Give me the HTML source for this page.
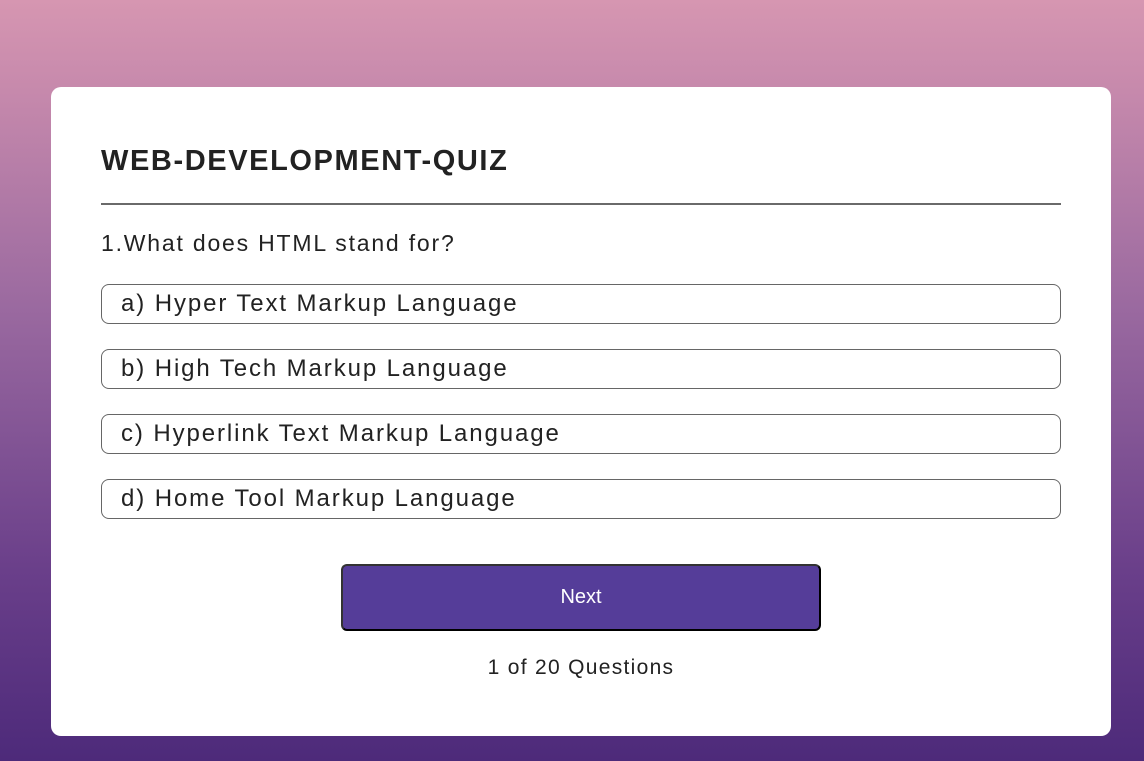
<!DOCTYPE html>
<html><head><style>
html,body{margin:0;height:761px;overflow:hidden}
body{background:linear-gradient(180deg,#d696b1 0%,#c689ac 12%,#9b6aa0 40%,#6a3f8a 75%,#4d2a7a 100%);font-family:"Liberation Sans",sans-serif;position:relative}
.card{position:absolute;left:51px;top:87px;width:1060px;height:649px;background:#fff;border-radius:10px}
h1{position:absolute;left:50px;top:58px;margin:0;font-size:29px;font-weight:bold;color:#222;letter-spacing:1.6px}
.hr{position:absolute;left:50px;top:116px;width:960px;height:2px;background:#6a6a6a}
.q{position:absolute;left:50px;top:143px;font-size:23px;color:#222;letter-spacing:1.8px}
.opt{position:absolute;left:50px;width:958px;height:38px;border:1px solid #666;border-radius:8px;font-size:24px;line-height:38px;color:#222;box-sizing:content-box;letter-spacing:1.9px}
.opt span{margin-left:19px}
.btn{position:absolute;left:290px;top:477px;width:476px;height:63px;background:#553d99;border:2px solid #333;border-right-color:#000;border-bottom-color:#000;border-radius:6px;color:#fff;font-size:20px;text-align:center;line-height:63px}
.cnt{position:absolute;left:0;width:1060px;top:569px;text-align:center;font-size:21px;color:#222;letter-spacing:1.3px}
</style></head><body>
<div class="card">
<h1>WEB-DEVELOPMENT-QUIZ</h1>
<div class="hr"></div>
<div class="q">1.What does HTML stand for?</div>
<div class="opt" style="top:197px"><span>a) Hyper Text Markup Language</span></div>
<div class="opt" style="top:262px"><span>b) High Tech Markup Language</span></div>
<div class="opt" style="top:327px"><span>c) Hyperlink Text Markup Language</span></div>
<div class="opt" style="top:392px"><span>d) Home Tool Markup Language</span></div>
<div class="btn">Next</div>
<div class="cnt">1 of 20 Questions</div>
</div>
</body></html>
